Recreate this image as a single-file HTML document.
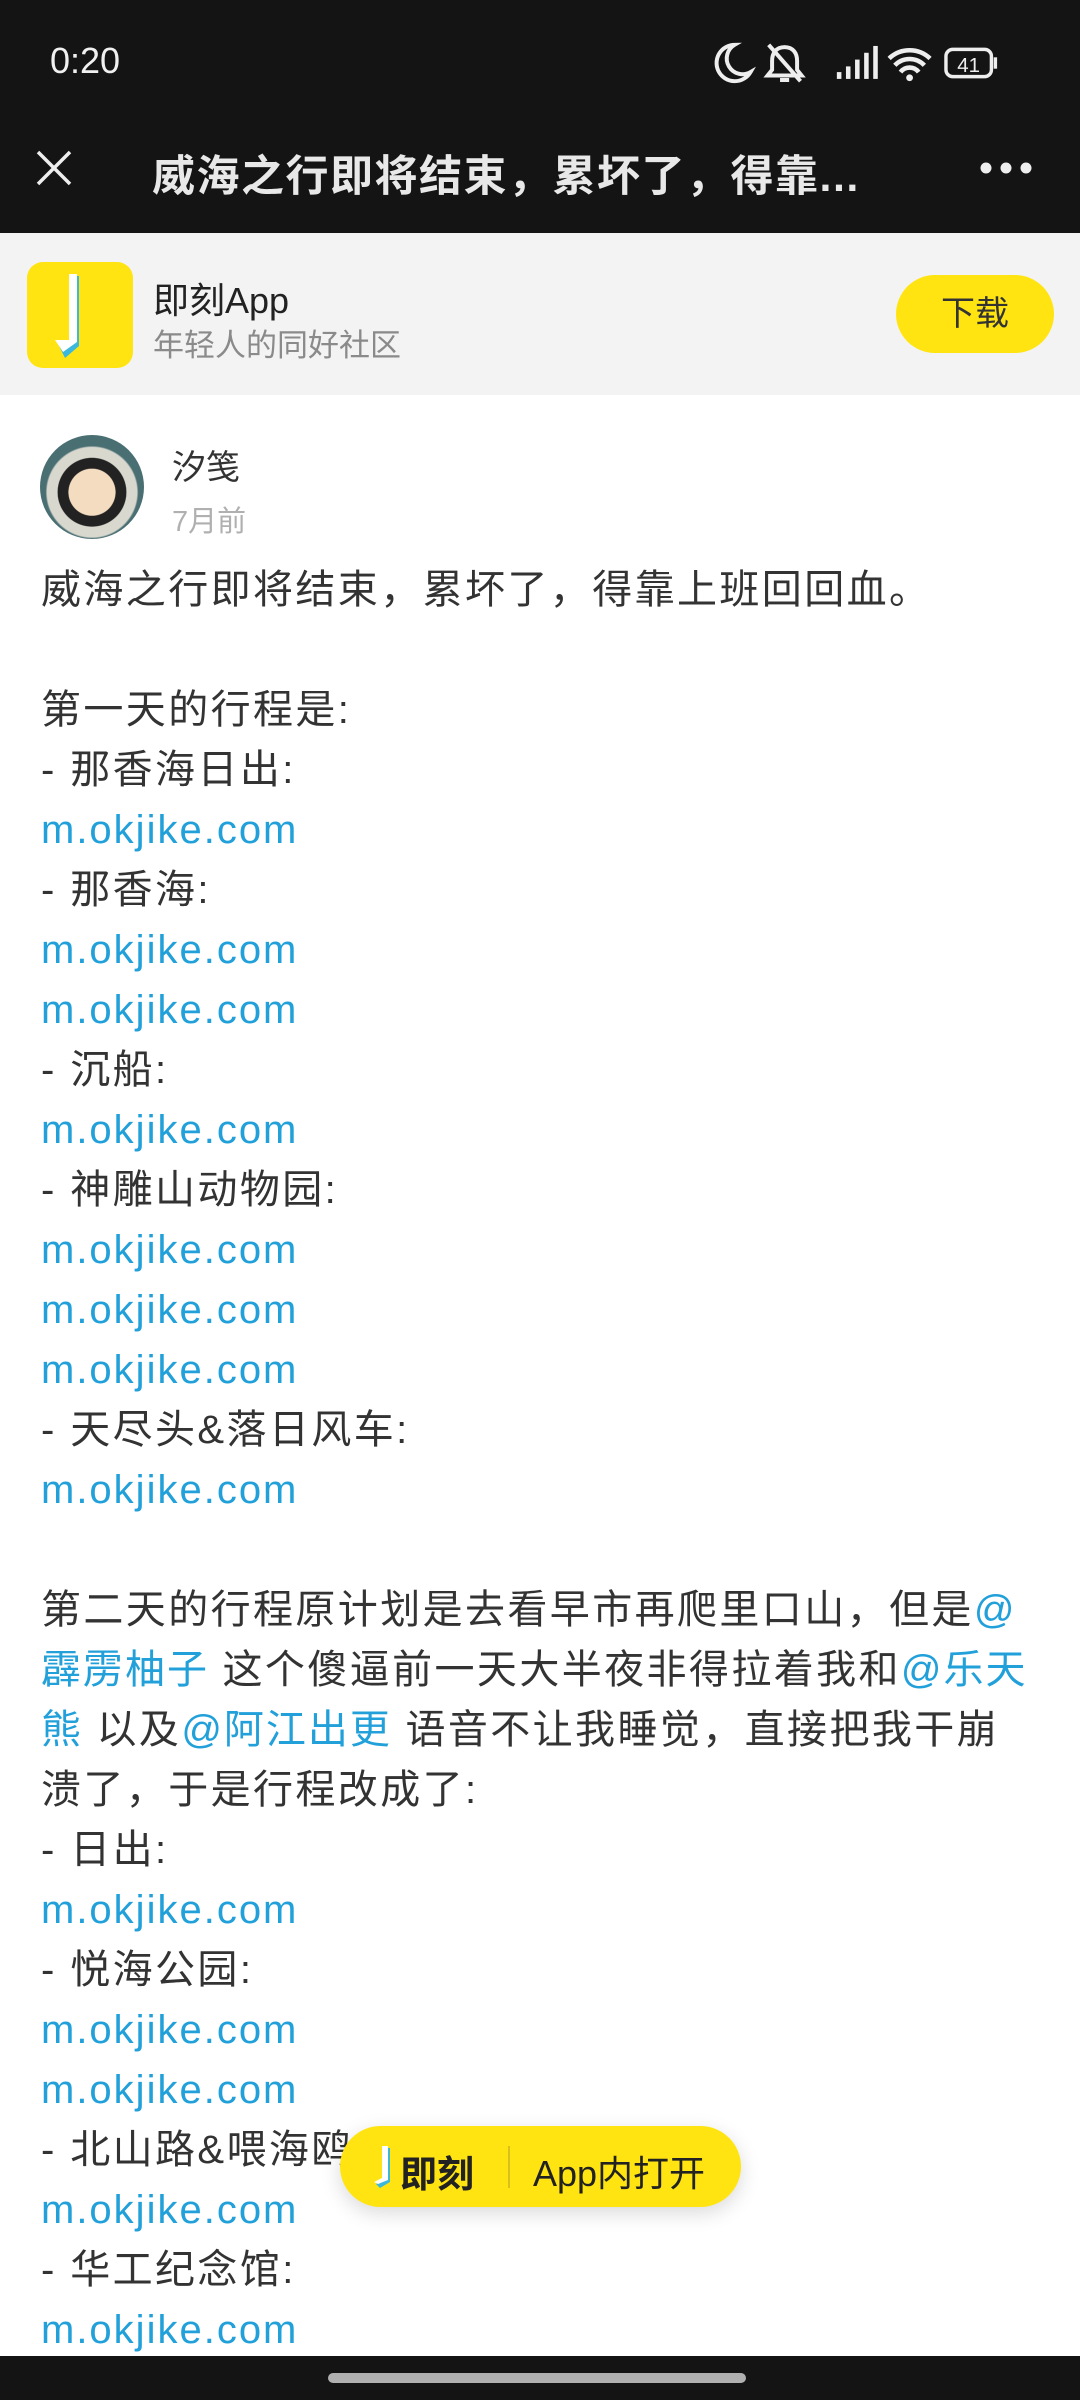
<!DOCTYPE html>
<html><head><meta charset="utf-8"><style>
*{margin:0;padding:0;box-sizing:border-box}
body{width:1080px;height:2400px;overflow:hidden;background:#fff;font-family:"Liberation Sans","Noto Sans CJK SC",sans-serif;position:relative}
.top{position:absolute;left:0;top:0;width:1080px;height:233px;background:#141414;color:#fff}
.time{position:absolute;left:50px;top:40px;font-size:36px;color:#f0f0f0}
.title{position:absolute;left:152px;top:142px;font-size:43px;font-weight:bold;color:#e8e8e8;white-space:nowrap;letter-spacing:1.5px}
.banner{position:absolute;left:0;top:233px;width:1080px;height:162px;background:#f3f3f3}
.logo{position:absolute;left:27px;top:262px;width:106px;height:106px;background:#ffe411;border-radius:16px}
.bname{position:absolute;left:153px;top:272px;font-size:36px;color:#222}
.bsub{position:absolute;left:153px;top:320px;font-size:31px;color:#8a8a8a}
.dl{position:absolute;left:896px;top:275px;width:158px;height:78px;background:#ffe411;border-radius:39px;font-size:34px;color:#333;text-align:center;line-height:78px}
.av{position:absolute;left:40px;top:435px;width:104px;height:104px;border-radius:52px;background:radial-gradient(circle at 50% 55%,#f3dcc0 0 30%,#222 31% 44%,#d8d8cf 45% 58%,#4a6f73 60%)}
.name{position:absolute;left:172px;top:440px;font-size:34px;color:#333}
.ago{position:absolute;left:172px;top:498px;font-size:29px;color:#b0b0b0}
.txt{position:absolute;left:41px;top:560px;font-size:40px;line-height:60px;color:#333;letter-spacing:2.4px;white-space:nowrap}
.txt a{color:#22a0da;text-decoration:none;letter-spacing:2px}
.pill{position:absolute;left:340px;top:2126px;width:401px;height:81px;background:#ffe411;border-radius:41px;box-shadow:0 6px 20px rgba(0,0,0,.15);font-size:36px;color:#222}
.bot{position:absolute;left:0;top:2356px;width:1080px;height:44px;background:#141414}
.hd{position:absolute;left:328px;top:17px;width:418px;height:10px;border-radius:5px;background:#b0b0b0}
</style></head><body>
<div class="top">
<div class="time">0:20</div>
<svg style="position:absolute;left:708px;top:38px" width="310" height="50" viewBox="0 0 270 44">
<path d="M22 6a16 16 0 1 0 14 24a13 13 0 0 1-14-24z" fill="none" stroke="#eee" stroke-width="3.5"/>
<path d="M66 8c-8 0-11 6-11 12v8l-4 5h30l-4-5v-8c0-6-3-12-11-12zM62 37h8" fill="none" stroke="#eee" stroke-width="3.5"/><path d="M52 6l28 32" stroke="#eee" stroke-width="3.5"/>
<rect x="112" y="30" width="4" height="6" fill="#eee"/><rect x="120" y="25" width="4" height="11" fill="#eee"/><rect x="128" y="19" width="4" height="17" fill="#eee"/><rect x="136" y="13" width="4" height="23" fill="#eee"/><rect x="144" y="7" width="4" height="29" fill="#eee"/>
<path d="M158 18a26 26 0 0 1 36 0M163 24a18 18 0 0 1 26 0M168 30a10 10 0 0 1 16 0" fill="none" stroke="#eee" stroke-width="4"/><circle cx="176" cy="35" r="3" fill="#eee"/>
<rect x="208" y="10" width="40" height="24" rx="6" fill="none" stroke="#eee" stroke-width="3"/><rect x="250" y="17" width="3" height="10" fill="#eee"/>
<text x="228" y="30" font-size="18" fill="#eee" text-anchor="middle" font-family="Liberation Sans">41</text>
</svg>
<svg style="position:absolute;left:34px;top:148px" width="40" height="40"><path d="M4 4l32 32M36 4L4 36" stroke="#eee" stroke-width="3.5"/></svg>
<div class="title">威海之行即将结束，累坏了，得靠...</div>
<svg style="position:absolute;left:978px;top:160px" width="56" height="16"><circle cx="8" cy="8" r="5.5" fill="#eee"/><circle cx="28" cy="8" r="5.5" fill="#eee"/><circle cx="48" cy="8" r="5.5" fill="#eee"/></svg>
</div>
<div class="banner"></div>
<div class="logo"><svg width="106" height="106" viewBox="0 0 106 106"><path d="M30 80l14 0 0-66 8 0 0 70 -14 12z" fill="#3bb8dc"/><path d="M28 78l14 0 0-66 8 0 0 68 -14 10z" fill="#fff"/></svg></div>
<div class="bname">即刻App</div>
<div class="bsub">年轻人的同好社区</div>
<div class="dl">下载</div>
<div class="av"></div>
<div class="name">汐笺</div>
<div class="ago">7月前</div>
<div class="txt">威海之行即将结束，累坏了，得靠上班回回血。<br><br>第一天的行程是:<br>- 那香海日出:<br><a>m.okjike.com</a><br>- 那香海:<br><a>m.okjike.com</a><br><a>m.okjike.com</a><br>- 沉船:<br><a>m.okjike.com</a><br>- 神雕山动物园:<br><a>m.okjike.com</a><br><a>m.okjike.com</a><br><a>m.okjike.com</a><br>- 天尽头&amp;落日风车:<br><a>m.okjike.com</a><br><br>第二天的行程原计划是去看早市再爬里口山，但是<a>@</a><br><a>霹雳柚子</a> 这个傻逼前一天大半夜非得拉着我和<a>@乐天</a><br><a>熊</a> 以及<a>@阿江出更</a> 语音不让我睡觉，直接把我干崩<br>溃了，于是行程改成了:<br>- 日出:<br><a>m.okjike.com</a><br>- 悦海公园:<br><a>m.okjike.com</a><br><a>m.okjike.com</a><br>- 北山路&amp;喂海鸥:<br><a>m.okjike.com</a><br>- 华工纪念馆:<br><a>m.okjike.com</a></div>
<div class="pill">
<svg style="position:absolute;left:30px;top:20px" width="24" height="42" viewBox="0 0 24 42"><path d="M6 38l8-4 0-32 6 0 0 34-10 6z" fill="#3bb8dc"/><path d="M4 36l8-4 0-32 6 0 0 34-10 4z" fill="#fff"/></svg>
<span style="position:absolute;left:60px;top:18px;font-weight:bold;font-size:37px">即刻</span>
<div style="position:absolute;left:168px;top:20px;width:2px;height:42px;background:#d8c21a"></div>
<span style="position:absolute;left:193px;top:19px">App内打开</span>
</div>
<div class="bot"><div class="hd"></div></div>
</body></html>
